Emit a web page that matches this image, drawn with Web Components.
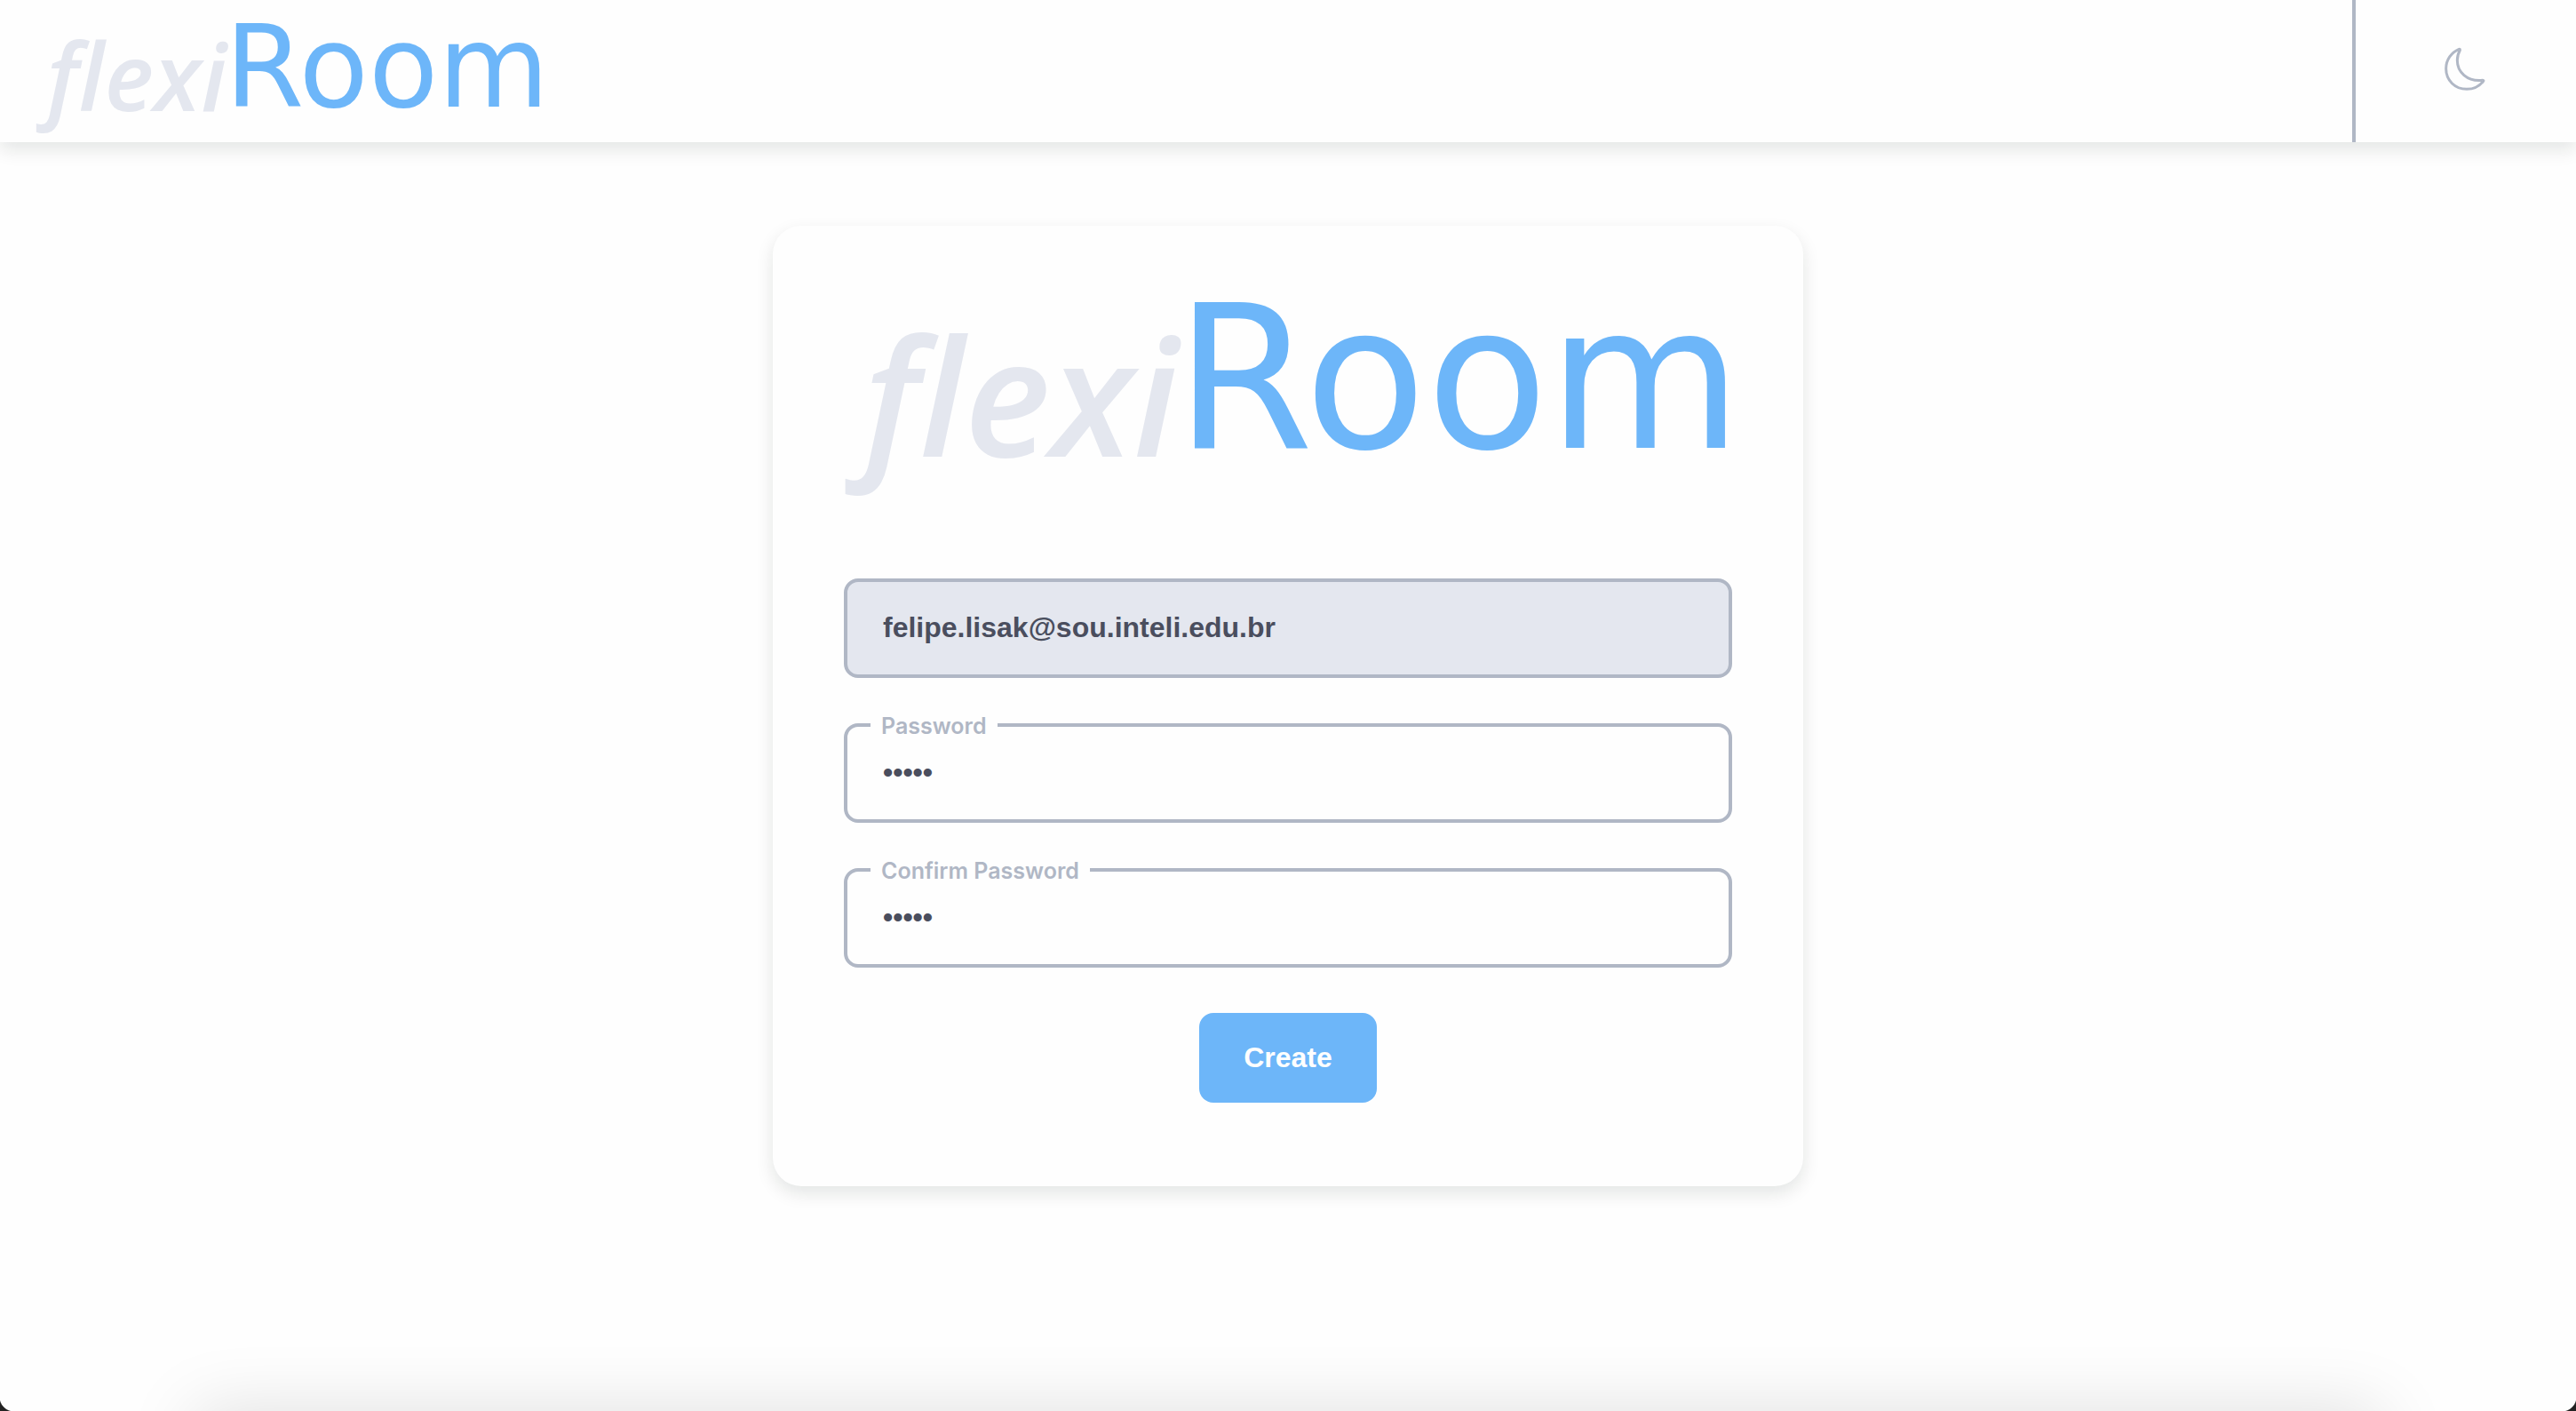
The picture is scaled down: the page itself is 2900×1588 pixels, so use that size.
<!DOCTYPE html>
<html lang="en">
<head>
<meta charset="utf-8">
<title>flexiRoom</title>
<style>
  html, body { margin: 0; height: 100%; }
  body { background: #fefefe; font-family: Inter, "Open Sans", sans-serif; color: #4a4e5e; }
</style>
</head>
<body>
<flexi-app></flexi-app>
<script>
const define = (name, html, setup) => {
  const template = document.createElement('template');
  template.innerHTML = html;
  customElements.define(name, class extends HTMLElement {
    constructor() {
      super();
      this.attachShadow({ mode: 'open' }).append(template.content.cloneNode(true));
    }
    connectedCallback() { if (setup) setup(this, this.shadowRoot); }
  });
};

define('flexi-logo', `
  <style>
    :host { display: block; }
    svg { display: block; width: 100%; height: auto; overflow: visible; }
    .script { font: italic 600 184px "Open Sans", sans-serif; fill: #e4e7ef; }
    .word { font: 400 224px "DejaVu Sans", sans-serif; fill: #6db6f9; }
  </style>
  <svg viewBox="0 0 1000 220" role="img" aria-label="flexiRoom">
    <text class="script" x="22" y="165">flexi</text>
    <text class="word" x="373" y="155">Room</text>
  </svg>`);

define('theme-toggle', `
  <style>
    :host { display: flex; }
    button { flex: 1; display: flex; align-items: center; justify-content: center; padding: 0 2px 2px 0; border: 0; background: none; color: #b0b7c5; cursor: pointer; }
    svg { width: 48px; height: 52px; }
  </style>
  <button type="button" aria-label="Toggle dark mode">
    <svg viewBox="452 159 144 156" fill="none" stroke="currentColor" stroke-width="9" stroke-linejoin="round">
      <path d="M504 166C478 177 460 202 460 232C460 271 490 301 530 301C553 301 573 291 586 274Q588 271 583 271C530 276 498 242 498 204C498 191 501 180 507 170Q508 165 504 166Z"/>
    </svg>
  </button>`);

define('site-header', `
  <style>
    :host { display: flex; justify-content: space-between; height: 160px; background: #fefefe; box-shadow: 0 8px 20px rgba(10, 30, 20, .11); }
    a { display: block; width: 572px; padding: 31px 40px 0; }
    theme-toggle { width: 248px; border-left: 4px solid #b0b7c5; }
  </style>
  <a href="#" aria-label="flexiRoom home"><flexi-logo></flexi-logo></a>
  <theme-toggle></theme-toggle>`);

define('text-field', `
  <style>
    :host { display: block; position: relative; }
    input { display: block; box-sizing: border-box; width: 100%; height: 112px; margin: 0; padding: 0 40px 2px; border: 4px solid #b0b7c5; border-radius: 16px; background: #fefefe; color: #4a4e5e; font: 700 32px "Liberation Sans", Arial, sans-serif; outline: 0; }
    input:disabled { background: #e4e7ef; opacity: 1; }
    label { position: absolute; left: 30px; top: -12px; padding: 0 12px; background: #fefefe; color: #b0b7c5; font-weight: 600; font-size: 25px; line-height: 30px; }
    label:empty { display: none; }
  </style>
  <input id="field"><label for="field"></label>`, (host, root) => {
  const input = root.querySelector('input');
  input.type = host.getAttribute('type') || 'text';
  input.value = host.getAttribute('value') || '';
  input.disabled = host.hasAttribute('disabled');
  root.querySelector('label').textContent = host.getAttribute('label') || '';
  if (!host.hasAttribute('label')) input.setAttribute('aria-label', 'Email');
});

define('action-button', `
  <style>
    :host { display: block; }
    button { min-width: 200px; height: 101px; padding: 0 48px; border: 0; border-radius: 16px; background: #6db6f9; color: #fefefe; font: 700 32px "Liberation Sans", Arial, sans-serif; cursor: pointer; }
  </style>
  <button type="button"><slot></slot></button>`);

define('signup-card', `
  <style>
    :host { display: block; box-sizing: border-box; width: 1160px; max-width: 100%; padding: 95px 80px 94px; border-radius: 32px; background: #fefefe; box-shadow: 0 8px 20px rgba(10, 30, 20, .11); }
    form { display: flex; flex-direction: column; gap: 51px; }
    flexi-logo { margin-bottom: 31px; }
    action-button { align-self: center; }
  </style>
  <form>
    <flexi-logo></flexi-logo>
    <text-field type="email" value="felipe.lisak@sou.inteli.edu.br" disabled></text-field>
    <text-field type="password" label="Password" value="12345"></text-field>
    <text-field type="password" label="Confirm Password" value="12345"></text-field>
    <action-button>Create</action-button>
  </form>`);

define('flexi-app', `
  <style>
    :host { display: flex; flex-direction: column; position: relative; min-height: 100%; overflow: hidden; }
    main { display: flex; justify-content: center; padding: 94px 40px; }
    .glow { position: absolute; left: 220px; right: 220px; top: 100%; height: 80px; box-shadow: 0 0 80px rgba(0, 0, 0, .13); }
    .corner { position: absolute; bottom: 0; width: 16px; height: 16px; }
    .left { left: 0; background: radial-gradient(circle at 100% 0, transparent 16px, #222 17px); }
    .right { right: 0; background: radial-gradient(circle at 0 0, transparent 16px, #222 17px); }
  </style>
  <site-header></site-header>
  <main><signup-card></signup-card></main>
  <div class="glow"></div>
  <div class="corner left"></div>
  <div class="corner right"></div>`);
</script>
</body>
</html>
